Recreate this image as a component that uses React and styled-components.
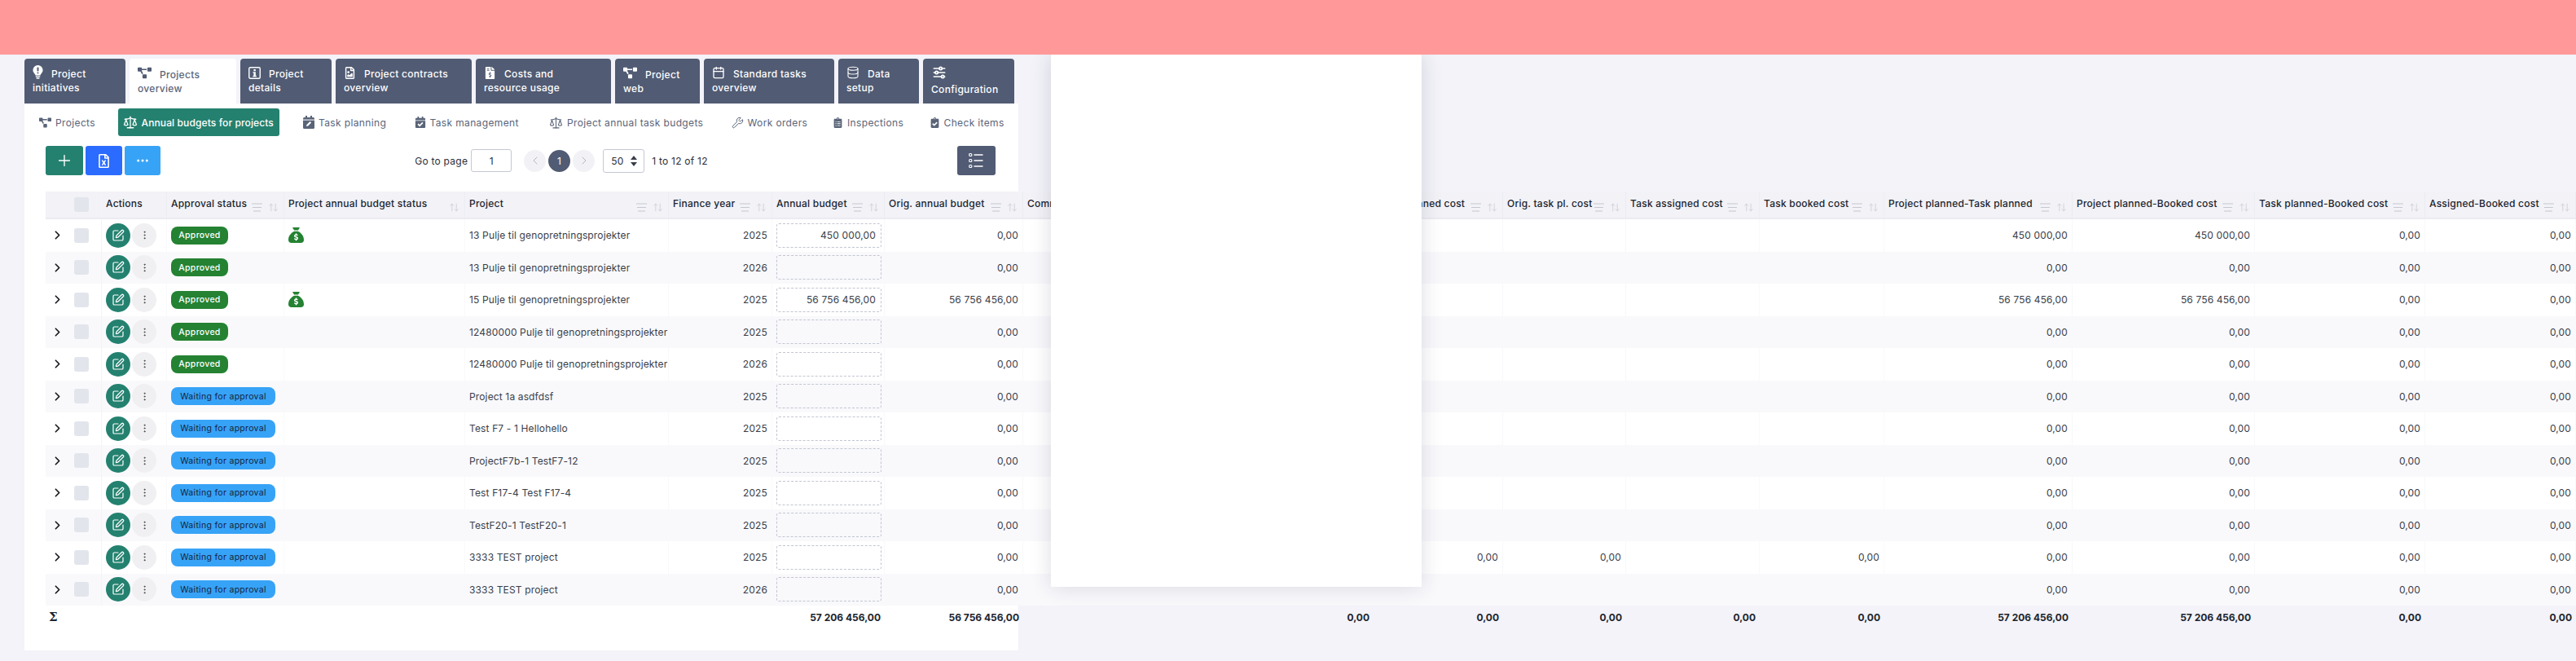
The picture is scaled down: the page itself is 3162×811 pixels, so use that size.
import React from "react";
import styled, { createGlobalStyle } from "styled-components";
import { Scale, Wrench, Database, Calendar, SquarePen, EllipsisVertical, ChevronRight, Plus, Ellipsis, ArrowUpDown, ChevronLeft } from "lucide-react";
import { FaProjectDiagram, FaFileInvoiceDollar, FaClipboardList, FaClipboardCheck, FaCalendarCheck, FaRegFileExcel, FaRegFileImage } from "react-icons/fa";
import { FaSackDollar } from "react-icons/fa6";
import { TbAdjustmentsHorizontal } from "react-icons/tb";

const FONT = `Inter, "Noto Sans", "Liberation Sans", sans-serif`;
const COLUMNS = "69px 80px 144px 222px 250px 127px 138px 170px 430px 159px 151px 164px 153px 231px 224px 209px 185px";

const Global = createGlobalStyle`
  html, body { margin: 0; padding: 0; background: #f3f3f9; overflow: hidden; }
  body { font-family: ${FONT}; font-size: 12px; color: #2b2f3a; }
`;

const Page = styled.div`
  position: relative;
  width: 3162px;
  height: 811px;
  overflow: hidden;
`;
const TopBar = styled.header`
  position: relative;
  z-index: 3;
  height: 67px;
  background: #ff9999;
`;
const TabBar = styled.nav`
  display: flex;
  gap: 5px;
  margin: 5px 0 0 30px;
  height: 55px;
`;
const Tab = styled.div`
  box-sizing: border-box;
  width: ${p => p.$w}px;
  padding: 10px 0 0 10px;
  border-radius: 4px 4px 0 0;
  background: ${p => (p.$active ? "#fff" : "#515b73")};
  color: ${p => (p.$active ? "#5a6478" : "#fff")};
  font-weight: 500;
  font-size: 12px;
  line-height: 17px;
  letter-spacing: 0.3px;
`;
const TabIcon = styled.span`
  display: inline-flex;
  align-items: center;
  height: 14px;
  margin-right: 10px;
  vertical-align: -2px;
`;
const Card = styled.main`
  box-sizing: border-box;
  width: 1220px;
  height: 671px;
  margin-left: 30px;
  padding-top: 6px;
  background: #fff;
`;
const SubNav = styled.div`
  display: flex;
  gap: 23.5px;
  height: 34px;
  padding-left: 12px;
`;
const SubTab = styled.div`
  display: flex;
  flex: none;
  align-items: center;
  gap: 5px;
  box-sizing: border-box;
  width: ${p => p.$w}px;
  padding: 0 0 0 6px;
  border-radius: 3px;
  white-space: nowrap;
  font-size: 12px;
  letter-spacing: ${p => (p.$active ? "0.12px" : "0.36px")};
  font-weight: ${p => (p.$active ? 500 : 400)};
  background: ${p => (p.$active ? "#24816f" : "transparent")};
  color: ${p => (p.$active ? "#fff" : "#5a6478")};
`;
const Toolbar = styled.div`
  display: flex;
  justify-content: space-between;
  align-items: center;
  height: 36px;
  margin: 12px 28px 20px 26px;
`;
const ActionGroup = styled.div`
  display: flex;
  gap: 3px;
`;
const SquareButton = styled.button`
  display: flex;
  align-items: center;
  justify-content: center;
  width: ${p => p.$w}px;
  height: 36px;
  padding: 0;
  border: 0;
  border-radius: 3px;
  background: ${p => p.$bg};
  color: #fff;
`;
const Pager = styled.div`
  display: flex;
  align-items: center;
  margin-left: 6px;
  font-size: 12px;
  letter-spacing: 0.25px;
  color: #2b2f3a;
`;
const PageInput = styled.input`
  box-sizing: border-box;
  width: 50px;
  height: 28px;
  margin: 0 15px 0 4px;
  border: 1px solid #c4c8d2;
  border-radius: 3px;
  text-align: center;
  font: 12px ${FONT};
  color: #2b2f3a;
  background: #fff;
`;
const PageCircle = styled.div`
  display: flex;
  align-items: center;
  justify-content: center;
  width: 27px;
  height: 27px;
  margin-right: 3px;
  border-radius: 50%;
  background: ${p => (p.$active ? "#515b73" : "#f2f2f6")};
  color: ${p => (p.$active ? "#fff" : "#a7abb6")};
`;
const PageSize = styled.div`
  display: flex;
  align-items: center;
  justify-content: space-between;
  box-sizing: border-box;
  width: 51px;
  height: 29px;
  margin: 0 9px 0 7px;
  padding: 0 8px 0 9px;
  border: 1px solid #c4c8d2;
  border-radius: 3px;
`;
const Table = styled.div`
  margin-left: 26px;
  width: 3106px;
`;
const HeadRow = styled.div`
  display: grid;
  grid-template-columns: ${COLUMNS};
  height: 34px;
  box-sizing: border-box;
  background: #f2f2f7;
  border-bottom: 2px solid #ebebf2;
`;
const HeadCell = styled.div`
  display: flex;
  justify-content: space-between;
  box-sizing: border-box;
  min-width: 0;
  padding: 7px 6px 0 5px;
  border-right: 1px solid #ecedf3;
  font-weight: 500;
  font-size: 12px;
  letter-spacing: 0.22px;
  color: #20242e;
  white-space: nowrap;
  overflow: hidden;
`;
const HeadIcons = styled.div`
  display: flex;
  gap: 7px;
  color: #c6c8d0;
  padding-top: 6px;
  flex: none;
`;
const Row = styled.div`
  display: grid;
  grid-template-columns: ${COLUMNS};
  height: 39.5px;
  background: ${p => (p.$odd ? "#f9f9fc" : "#fff")};
`;
const Cell = styled.div`
  display: flex;
  align-items: center;
  justify-content: ${p => (p.$right ? "flex-end" : "flex-start")};
  gap: ${p => p.$gap || 0}px;
  box-sizing: border-box;
  min-width: 0;
  padding: 0 5px;
  border-right: 1px solid #f9f9fb;
  color: #3a3e49;
  letter-spacing: 0.14px;
  white-space: nowrap;
`;
const CheckBox = styled.span`
  display: block;
  width: 18px;
  height: 18px;
  margin-left: ${p => p.$ml}px;
  border-radius: 3px;
  background: #e2e5ec;
`;
const SelectCell = styled.div`
  display: flex;
  align-items: center;
  padding-left: 6px;
  border-right: 1px solid #f4f4f8;
`;
const RoundButton = styled.button`
  display: flex;
  align-items: center;
  justify-content: center;
  width: 30px;
  height: 30px;
  padding: 0;
  border: 0;
  border-radius: 50%;
  background: ${p => (p.$primary ? "#24816f" : "#f0f0f2")};
  color: ${p => (p.$primary ? "#fff" : "#444")};
`;
const Badge = styled.span`
  display: inline-flex;
  align-items: center;
  justify-content: center;
  width: ${p => (p.$approved ? 70 : 128)}px;
  height: 22px;
  border-radius: 8px;
  background: ${p => (p.$approved ? "#248232" : "#37a3f7")};
  color: ${p => (p.$approved ? "#fff" : "#14233c")};
  font-size: 10.5px;
  font-weight: ${p => (p.$approved ? 500 : 400)};
  letter-spacing: 0.3px;
`;
const BudgetInput = styled.div`
  display: flex;
  align-items: center;
  justify-content: flex-end;
  box-sizing: border-box;
  width: 130px;
  height: 30px;
  margin-right: -2px;
  padding-right: 6px;
  border: 1px dashed #c3c6d2;
  border-radius: 3px;
`;
const FootRow = styled.div`
  display: grid;
  grid-template-columns: ${COLUMNS};
  height: 28px;
`;
const FootCell = styled.div`
  display: flex;
  align-items: center;
  justify-content: flex-end;
  padding-right: 5px;
  font-weight: 700;
  font-size: 12px;
  color: #20242e;
  white-space: nowrap;
`;
const SumSign = styled.div`
  padding-left: 4px;
  font: 700 15px/28px "DejaVu Serif", serif;
  color: #20242e;
`;
const Dialog = styled.aside`
  position: absolute;
  z-index: 2;
  top: 67px;
  left: 1290px;
  width: 455px;
  height: 653px;
  background: #fff;
  box-shadow: 0 0 24px rgba(40, 44, 70, 0.16);
`;

const Bulb = () => (
  <svg width="13" height="17" viewBox="0 0 16 21" style={{ marginTop: -2 }}>
    <path fill="#fff" d="M8 0a7.5 7.5 0 0 0-7.5 7.5c0 2.6 1.3 4 2.5 5.4.7.8 1.2 1.6 1.3 2.6h7.4c.1-1 .6-1.8 1.3-2.6 1.2-1.4 2.5-2.8 2.5-5.4A7.5 7.5 0 0 0 8 0z" />
    <rect x="6.8" y="3" width="2.4" height="6.4" rx="1" fill="#515b73" />
    <rect x="6.8" y="10.4" width="2.4" height="2.4" rx="1.2" fill="#515b73" />
    <rect x="4.6" y="16.4" width="6.8" height="1.6" fill="#fff" />
    <rect x="5.4" y="18.8" width="5.2" height="2" rx="1" fill="#fff" />
  </svg>
);
const InfoSquare = () => (
  <svg width="15" height="15" viewBox="0 0 15 15">
    <rect x="0.75" y="0.75" width="13.5" height="13.5" rx="1.5" fill="none" stroke="#fff" strokeWidth="1.4" />
    <rect x="6.4" y="3" width="2.4" height="2.2" fill="#fff" />
    <path fill="#fff" d="M5.4 6.2h3.4v4.6h1v1.4H5.4v-1.4h1V7.6h-1z" />
  </svg>
);
const CalendarPen = () => (
  <svg width="14" height="16" viewBox="0 0 14 16">
    <rect x="0" y="2" width="14" height="14" rx="1.5" fill="#5a6478" />
    <rect x="3" y="0" width="2" height="4" fill="#5a6478" />
    <rect x="9" y="0" width="2" height="4" fill="#5a6478" />
    <rect x="0" y="4.6" width="14" height="1" fill="#fff" />
    <path d="M4 13l.5-2 4-4 1.6 1.6-4 4z" fill="#fff" />
  </svg>
);
const ColumnList = () => (
  <svg width="18" height="20" viewBox="0 0 18 20" fill="none" stroke="#fff">
    <rect x="0.8" y="1.5" width="3" height="3" rx="1" strokeWidth="1.2" />
    <rect x="0.8" y="8.5" width="3" height="3" rx="1" strokeWidth="1.2" />
    <rect x="0.8" y="15.5" width="3" height="3" rx="1" strokeWidth="1.2" />
    <path d="M6.5 3h11M6.5 10h11M6.5 17h11" strokeWidth="1.4" />
  </svg>
);
const UpDownCaret = () => (
  <svg width="8" height="13" viewBox="0 0 8 13" fill="#3a3e49">
    <path d="M4 0l4 5H0zM4 13L0 8h8z" />
  </svg>
);
const FilterLines = () => (
  <svg width="13" height="13" viewBox="0 0 13 13" stroke="currentColor" strokeWidth="1.1">
    <path d="M0 2h13M1 6.5h11M2 11h9" />
  </svg>
);

const MAIN_TABS = [
  { w: 124, icon: <Bulb />, lines: ["Project", "initiatives"] },
  { w: 131, active: true, icon: <FaProjectDiagram size={17} color="#515b73" />, lines: ["Projects", "overview"] },
  { w: 112, icon: <InfoSquare />, lines: ["Project", "details"] },
  { w: 167, icon: <FaRegFileImage size={15} />, lines: ["Project contracts", "overview"] },
  { w: 166, icon: <FaFileInvoiceDollar size={15} />, lines: ["Costs and", "resource usage"] },
  { w: 104, icon: <FaProjectDiagram size={17} />, lines: ["Project", "web"] },
  { w: 160, icon: <Calendar size={16} strokeWidth={2} />, lines: ["Standard tasks", "overview"] },
  { w: 99, icon: <Database size={16} strokeWidth={1.6} />, lines: ["Data", "setup"] },
  { w: 112, icon: <TbAdjustmentsHorizontal size={20} />, lines: ["", "Configuration"] },
];

const SUB_TABS = [
  { label: "Projects", w: 79, icon: <FaProjectDiagram size={15} /> },
  { label: "Annual budgets for projects", w: 198, active: true, icon: <Scale size={18} strokeWidth={1.7} /> },
  { label: "Task planning", w: 113, icon: <CalendarPen /> },
  { label: "Task management", w: 142, icon: <FaCalendarCheck size={14} /> },
  { label: "Project annual task budgets", w: 200, icon: <Scale size={17} strokeWidth={1.5} /> },
  { label: "Work orders", w: 101, icon: <Wrench size={15} strokeWidth={1.6} /> },
  { label: "Inspections", w: 95, icon: <FaClipboardList size={13} /> },
  { label: "Check items", w: 102, icon: <FaClipboardCheck size={13} /> },
];

const HEADERS = [
  { label: "", check: true },
  { label: "Actions", plain: true },
  { label: "Approval status" },
  { label: "Project annual budget status", noFilter: true },
  { label: "Project" },
  { label: "Finance year" },
  { label: "Annual budget" },
  { label: "Orig. annual budget" },
  { label: "Commitments" },
  { label: "Proj. planned cost" },
  { label: "Orig. task pl. cost" },
  { label: "Task assigned cost" },
  { label: "Task booked cost" },
  { label: "Project planned-Task planned" },
  { label: "Project planned-Booked cost" },
  { label: "Task planned-Booked cost" },
  { label: "Assigned-Booked cost" },
];

const ROWS = [
  ["Approved", true, "13 Pulje til genopretningsprojekter", "2025", "450 000,00", "0,00", "450 000,00", "450 000,00"],
  ["Approved", false, "13 Pulje til genopretningsprojekter", "2026", "", "0,00", "0,00", "0,00"],
  ["Approved", true, "15 Pulje til genopretningsprojekter", "2025", "56 756 456,00", "56 756 456,00", "56 756 456,00", "56 756 456,00"],
  ["Approved", false, "12480000 Pulje til genopretningsprojekter", "2025", "", "0,00", "0,00", "0,00"],
  ["Approved", false, "12480000 Pulje til genopretningsprojekter", "2026", "", "0,00", "0,00", "0,00"],
  ["Waiting for approval", false, "Project 1a asdfdsf", "2025", "", "0,00", "0,00", "0,00"],
  ["Waiting for approval", false, "Test F7 - 1 Hellohello", "2025", "", "0,00", "0,00", "0,00"],
  ["Waiting for approval", false, "ProjectF7b-1 TestF7-12", "2025", "", "0,00", "0,00", "0,00"],
  ["Waiting for approval", false, "Test F17-4 Test F17-4", "2025", "", "0,00", "0,00", "0,00"],
  ["Waiting for approval", false, "TestF20-1 TestF20-1", "2025", "", "0,00", "0,00", "0,00"],
  ["Waiting for approval", false, "3333 TEST project", "2025", "", "0,00", "0,00", "0,00", true],
  ["Waiting for approval", false, "3333 TEST project", "2026", "", "0,00", "0,00", "0,00"],
];

const FOOT = ["", "", "", "", "", "57 206 456,00", "56 756 456,00", "0,00", "0,00", "0,00", "0,00", "0,00", "57 206 456,00", "57 206 456,00", "0,00", "0,00"];

function TableHeadCell({ col }) {
  if (col.check) {
    return (
      <SelectCell>
        <CheckBox $ml={29} />
      </SelectCell>
    );
  }
  return (
    <HeadCell>
      <span>{col.label}</span>
      {!col.plain && (
        <HeadIcons>
          {!col.noFilter && <FilterLines />}
          <ArrowUpDown size={13} strokeWidth={1.3} />
        </HeadIcons>
      )}
    </HeadCell>
  );
}

function BudgetRow({ row, index }) {
  const [status, bag, project, year, budget, orig, planned, booked, extra] = row;
  const approved = status === "Approved";
  return (
    <Row $odd={index % 2 === 1}>
      <SelectCell>
        <ChevronRight size={17} strokeWidth={2.4} color="#15171c" />
        <CheckBox $ml={12} />
      </SelectCell>
      <Cell $gap={2}>
        <RoundButton $primary>
          <SquarePen size={16} strokeWidth={1.8} />
        </RoundButton>
        <RoundButton>
          <EllipsisVertical size={13} strokeWidth={1.8} />
        </RoundButton>
      </Cell>
      <Cell>
        <Badge $approved={approved}>{status}</Badge>
      </Cell>
      <Cell>{bag && <FaSackDollar size={19} color="#248232" />}</Cell>
      <Cell>{project}</Cell>
      <Cell $right>{year}</Cell>
      <Cell $right>
        <BudgetInput>{budget}</BudgetInput>
      </Cell>
      <Cell $right>{orig}</Cell>
      <Cell />
      <Cell $right>{extra ? "0,00" : ""}</Cell>
      <Cell $right>{extra ? "0,00" : ""}</Cell>
      <Cell />
      <Cell $right>{extra ? "0,00" : ""}</Cell>
      <Cell $right>{planned}</Cell>
      <Cell $right>{booked}</Cell>
      <Cell $right>0,00</Cell>
      <Cell $right>0,00</Cell>
    </Row>
  );
}

export default function App() {
  return (
    <Page>
      <Global />
      <TopBar />
      <TabBar>
        {MAIN_TABS.map(t => (
          <Tab key={t.lines.join()} $w={t.w} $active={t.active}>
            <TabIcon>{t.icon}</TabIcon>
            {t.lines[0]}
            <br />
            {t.lines[1]}
          </Tab>
        ))}
      </TabBar>
      <Card>
        <SubNav>
          {SUB_TABS.map(t => (
            <SubTab key={t.label} $w={t.w} $active={t.active}>
              {t.icon}
              {t.label}
            </SubTab>
          ))}
        </SubNav>
        <Toolbar>
          <ActionGroup>
            <SquareButton $w={46} $bg="#24816f">
              <Plus size={22} strokeWidth={1.5} />
            </SquareButton>
            <SquareButton $w={45} $bg="#2b6bff">
              <FaRegFileExcel size={17} />
            </SquareButton>
            <SquareButton $w={44} $bg="#37a3f7">
              <Ellipsis size={18} />
            </SquareButton>
          </ActionGroup>
          <Pager>
            Go to page
            <PageInput defaultValue="1" readOnly />
            <PageCircle>
              <ChevronLeft size={16} strokeWidth={1.3} />
            </PageCircle>
            <PageCircle $active>1</PageCircle>
            <PageCircle>
              <ChevronRight size={16} strokeWidth={1.3} />
            </PageCircle>
            <PageSize>
              50
              <UpDownCaret />
            </PageSize>
            1 to 12 of 12
          </Pager>
          <SquareButton $w={47} $bg="#515b73">
            <ColumnList />
          </SquareButton>
        </Toolbar>
        <Table>
          <HeadRow>
            {HEADERS.map((c, i) => (
              <TableHeadCell key={i} col={c} />
            ))}
          </HeadRow>
          {ROWS.map((r, i) => (
            <BudgetRow key={i} row={r} index={i} />
          ))}
          <FootRow>
            <SumSign>Σ</SumSign>
            {FOOT.map((v, i) => (
              <FootCell key={i}>{v}</FootCell>
            ))}
          </FootRow>
        </Table>
      </Card>
      <Dialog />
    </Page>
  );
}
